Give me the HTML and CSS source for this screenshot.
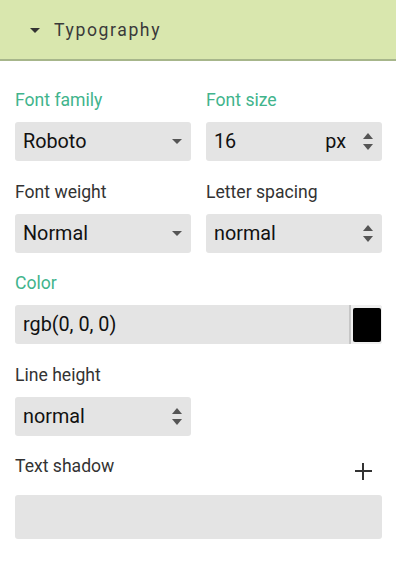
FILE: index.html
```html
<!DOCTYPE html>
<html>
<head>
<meta charset="utf-8">
<link rel="stylesheet" href="styles.css">
</head>
<body>
<div class="panel">
  <div class="header">
    <span class="hcaret"></span>
    <span class="htitle">Typography</span>
  </div>
  <div class="content">
    <div class="row two">
      <div class="field">
        <div class="label active">Font family</div>
        <div class="box select"><span class="val">Roboto</span><span class="caret"></span></div>
      </div>
      <div class="field">
        <div class="label active">Font size</div>
        <div class="box number"><span class="val">16</span><span class="unit">px</span><span class="spin"><i class="up"></i><i class="down"></i></span></div>
      </div>
    </div>
    <div class="row two">
      <div class="field">
        <div class="label">Font weight</div>
        <div class="box select"><span class="val">Normal</span><span class="caret"></span></div>
      </div>
      <div class="field">
        <div class="label">Letter spacing</div>
        <div class="box number"><span class="val">normal</span><span class="spin"><i class="up"></i><i class="down"></i></span></div>
      </div>
    </div>
    <div class="row">
      <div class="field">
        <div class="label active">Color</div>
        <div class="box color"><span class="val">rgb(0, 0, 0)</span><span class="swatch"><span class="chip"></span></span></div>
      </div>
    </div>
    <div class="row two">
      <div class="field">
        <div class="label">Line height</div>
        <div class="box number"><span class="val">normal</span><span class="spin"><i class="up"></i><i class="down"></i></span></div>
      </div>
    </div>
    <div class="row">
      <div class="field">
        <div class="label shadowhead"><span>Text shadow</span><span class="plus"></span></div>
        <div class="box empty"></div>
      </div>
    </div>
  </div>
</div>
</body>
</html>
```
FILE: styles.css
```css
html, body {
  margin: 0;
  padding: 0;
  background: #ffffff;
}
body {
  font-family: Roboto, "Liberation Sans", sans-serif;
  color: #333333;
  width: 396px;
  height: 562px;
  overflow: hidden;
}
.header {
  height: 59px;
  background: #d9e7ae;
  border-bottom: 2px solid #a7b68b;
  display: flex;
  align-items: center;
  padding-left: 30px;
  box-sizing: content-box;
}
.hcaret {
  width: 0;
  height: 0;
  border-left: 5px solid transparent;
  border-right: 5px solid transparent;
  border-top: 5px solid #333333;
  margin-top: 1px;
}
.htitle {
  margin-left: 14px;
  font-size: 17.6px;
  letter-spacing: 1.6px;
  color: #3a3a3a;
}
.content {
  padding: 29px 14px 0 15px;
}
.row {
  margin-bottom: 20.5px;
}
.row.two {
  display: grid;
  grid-template-columns: 176px 176px;
  column-gap: 15px;
}
.label {
  font-size: 17.6px;
  line-height: 21px;
  height: 21px;
  margin-bottom: 11px;
  color: #333333;
}
.label.active {
  color: #41b48c;
}
.box {
  height: 39px;
  background: #e4e4e4;
  border-radius: 3px;
  display: flex;
  align-items: center;
  padding: 0 9px 0 8px;
  box-sizing: border-box;
  font-size: 19.8px;
  color: #111111;
}
.val {
  flex: 1;
}
.caret {
  width: 0;
  height: 0;
  border-left: 5px solid transparent;
  border-right: 5px solid transparent;
  border-top: 5px solid #555555;
}
.unit {
  margin-right: 17px;
}
.spin {
  display: flex;
  flex-direction: column;
  align-items: center;
  gap: 5px;
}
.spin i {
  display: block;
  width: 0;
  height: 0;
  border-left: 5px solid transparent;
  border-right: 5px solid transparent;
}
.spin .up {
  border-bottom: 6px solid #555555;
}
.spin .down {
  border-top: 6px solid #555555;
}
.box.color {
  padding-right: 0;
  overflow: hidden;
}
.swatch {
  align-self: stretch;
  width: 31px;
  border-left: 2px solid #c6c6c6;
  background: #efefef;
  display: flex;
  align-items: center;
  justify-content: center;
}
.chip {
  width: 28px;
  height: 34px;
  background: #000000;
  border-radius: 2px;
}
.shadowhead {
  display: flex;
  justify-content: space-between;
  align-items: center;
  margin-bottom: 18px;
}
.plus {
  position: relative;
  width: 17px;
  height: 17px;
  margin-right: 10px;
  margin-top: 9px;
}
.plus::before, .plus::after {
  content: "";
  position: absolute;
  background: #333333;
}
.plus::before {
  left: 7px;
  top: 0;
  width: 2px;
  height: 17px;
}
.plus::after {
  left: 0;
  top: 7px;
  width: 17px;
  height: 2px;
}
.box.empty {
  height: 44px;
}
```
